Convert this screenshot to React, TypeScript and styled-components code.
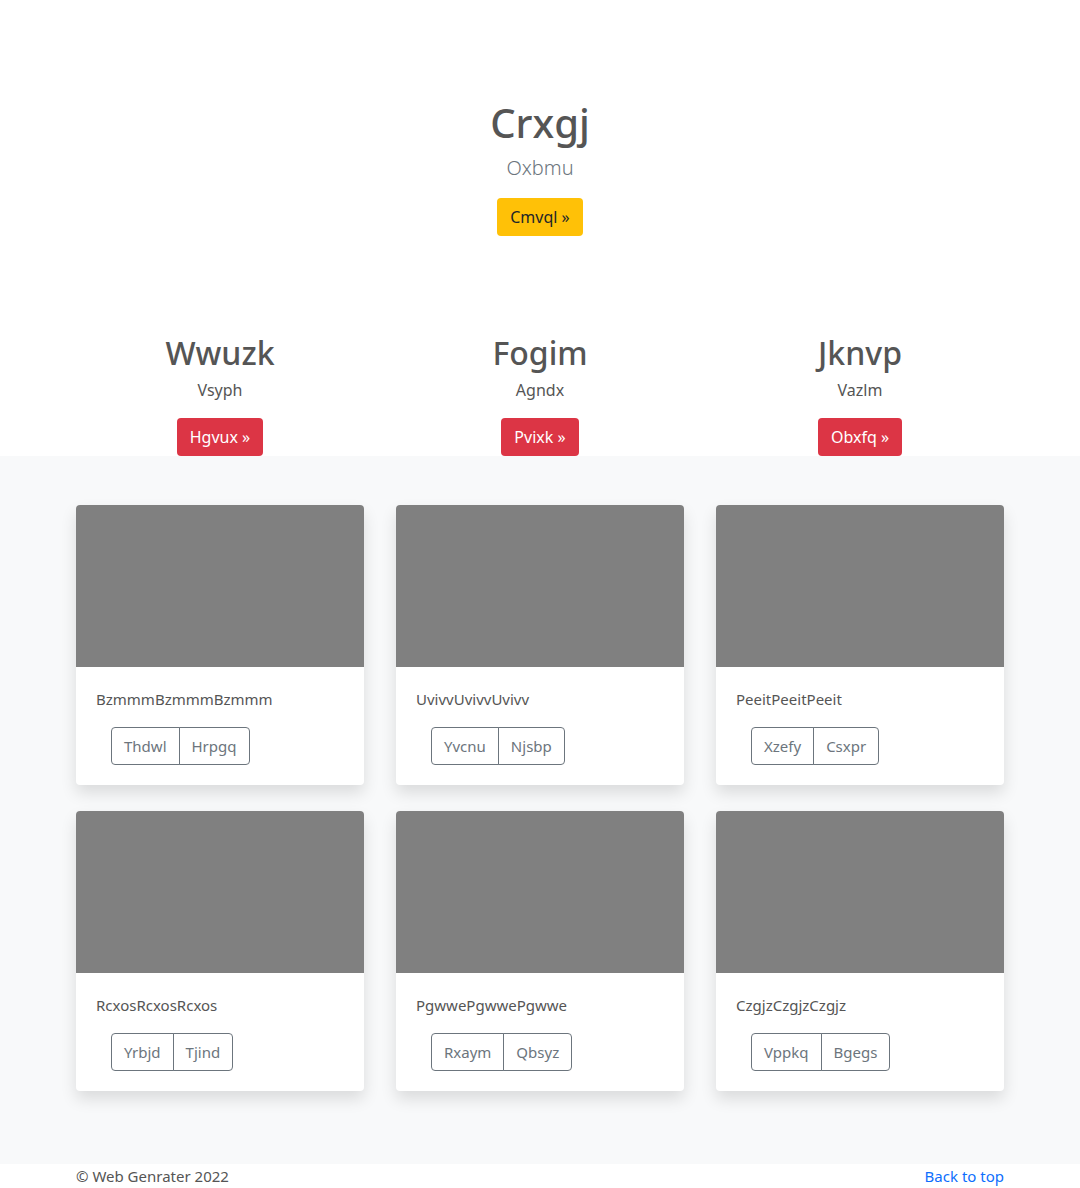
import styled, { createGlobalStyle } from "styled-components";

const GlobalStyle = createGlobalStyle`
  html, body {
    margin: 0;
    padding: 0;
    background: #fff;
  }
  body {
    font-family: "Noto Sans", "Open Sans", sans-serif;
    font-size: 16px;
    line-height: 1.5;
    color: #555;
  }
  * {
    box-sizing: border-box;
  }
`;

const Container = styled.div`
  width: 960px;
  margin: 0 auto;
`;

const Hero = styled.section`
  padding: 99px 0 98px;
  text-align: center;
`;

const HeroTitle = styled.h1`
  margin: 0 0 6px;
  font-size: 40px;
  line-height: 48px;
  font-weight: 500;
  color: #555;
`;

const Lead = styled.p`
  margin: 0 0 15px;
  font-size: 20px;
  line-height: 30px;
  font-weight: 300;
  color: #6c757d;
`;

const Button = styled.a<{ $variant: "warning" | "danger" }>`
  display: inline-block;
  padding: 6px 12px;
  font-size: 16px;
  line-height: 24px;
  border-radius: 4px;
  border: 1px solid transparent;
  text-decoration: none;
  cursor: pointer;
  background: ${({ $variant }) => ($variant === "warning" ? "#ffc107" : "#dc3545")};
  color: ${({ $variant }) => ($variant === "warning" ? "#212529" : "#fff")};
`;

const Features = styled.div`
  display: grid;
  grid-template-columns: repeat(3, 1fr);
  text-align: center;
`;

const Feature = styled.div`
  padding: 0 16px;
`;

const FeatureTitle = styled.h2`
  margin: 0 0 6px;
  font-size: 32px;
  line-height: 38px;
  font-weight: 500;
  color: #555;
`;

const FeatureText = styled.p`
  margin: 0 0 16px;
`;

const Album = styled.section`
  background: #f8f9fa;
  padding: 49px 0 73px;
`;

const CardGrid = styled.div`
  display: grid;
  grid-template-columns: repeat(3, 288px);
  column-gap: 32px;
  row-gap: 26px;
  padding: 0 16px;
`;

const Card = styled.div`
  height: 280px;
  background: #fff;
  border-radius: 4px;
  overflow: hidden;
  box-shadow: 0 8px 16px rgba(0, 0, 0, 0.12);
  display: flex;
  flex-direction: column;
`;

const Thumb = styled.div`
  height: 162px;
  background: #808080;
`;

const CardBody = styled.div`
  padding: 21px 20px 19px;
`;

const CardText = styled.p`
  margin: 0 0 16px;
  font-size: 15px;
`;

const BtnGroup = styled.div`
  display: inline-flex;
  margin-left: 15px;
`;

const OutlineBtn = styled.button`
  font-family: inherit;
  font-size: 15px;
  line-height: 24px;
  padding: 6px 12px;
  background: transparent;
  color: #6c757d;
  border: 1px solid #6c757d;
  cursor: pointer;

  &:first-child {
    border-radius: 4px 0 0 4px;
  }
  &:last-child {
    border-radius: 0 4px 4px 0;
    margin-left: -1px;
  }
`;

const Footer = styled.footer`
  padding: 0 16px;
  display: flex;
  justify-content: space-between;
  font-size: 15px;
  line-height: 24px;
`;

const TopLink = styled.a`
  color: #0d6efd;
  text-decoration: none;
`;

const features = [
  { title: "Wwuzk", text: "Vsyph", action: "Hgvux" },
  { title: "Fogim", text: "Agndx", action: "Pvixk" },
  { title: "Jknvp", text: "Vazlm", action: "Obxfq" },
];

const cards = [
  { text: "BzmmmBzmmmBzmmm", buttons: ["Thdwl", "Hrpgq"] },
  { text: "UvivvUvivvUvivv", buttons: ["Yvcnu", "Njsbp"] },
  { text: "PeeitPeeitPeeit", buttons: ["Xzefy", "Csxpr"] },
  { text: "RcxosRcxosRcxos", buttons: ["Yrbjd", "Tjind"] },
  { text: "PgwwePgwwePgwwe", buttons: ["Rxaym", "Qbsyz"] },
  { text: "CzgjzCzgjzCzgjz", buttons: ["Vppkq", "Bgegs"] },
];

export default function App() {
  return (
    <>
      <GlobalStyle />
      <Hero>
        <HeroTitle>Crxgj</HeroTitle>
        <Lead>Oxbmu</Lead>
        <Button $variant="warning">Cmvql »</Button>
      </Hero>

      <Container>
        <Features>
          {features.map((f) => (
            <Feature key={f.title}>
              <FeatureTitle>{f.title}</FeatureTitle>
              <FeatureText>{f.text}</FeatureText>
              <Button $variant="danger">{f.action} »</Button>
            </Feature>
          ))}
        </Features>
      </Container>

      <Album>
        <Container>
          <CardGrid>
            {cards.map((c) => (
              <Card key={c.text}>
                <Thumb />
                <CardBody>
                  <CardText>{c.text}</CardText>
                  <BtnGroup>
                    {c.buttons.map((b) => (
                      <OutlineBtn key={b}>{b}</OutlineBtn>
                    ))}
                  </BtnGroup>
                </CardBody>
              </Card>
            ))}
          </CardGrid>
        </Container>
      </Album>

      <Container>
        <Footer>
          <span>© Web Genrater 2022</span>
          <TopLink href="#">Back to top</TopLink>
        </Footer>
      </Container>
    </>
  );
}
